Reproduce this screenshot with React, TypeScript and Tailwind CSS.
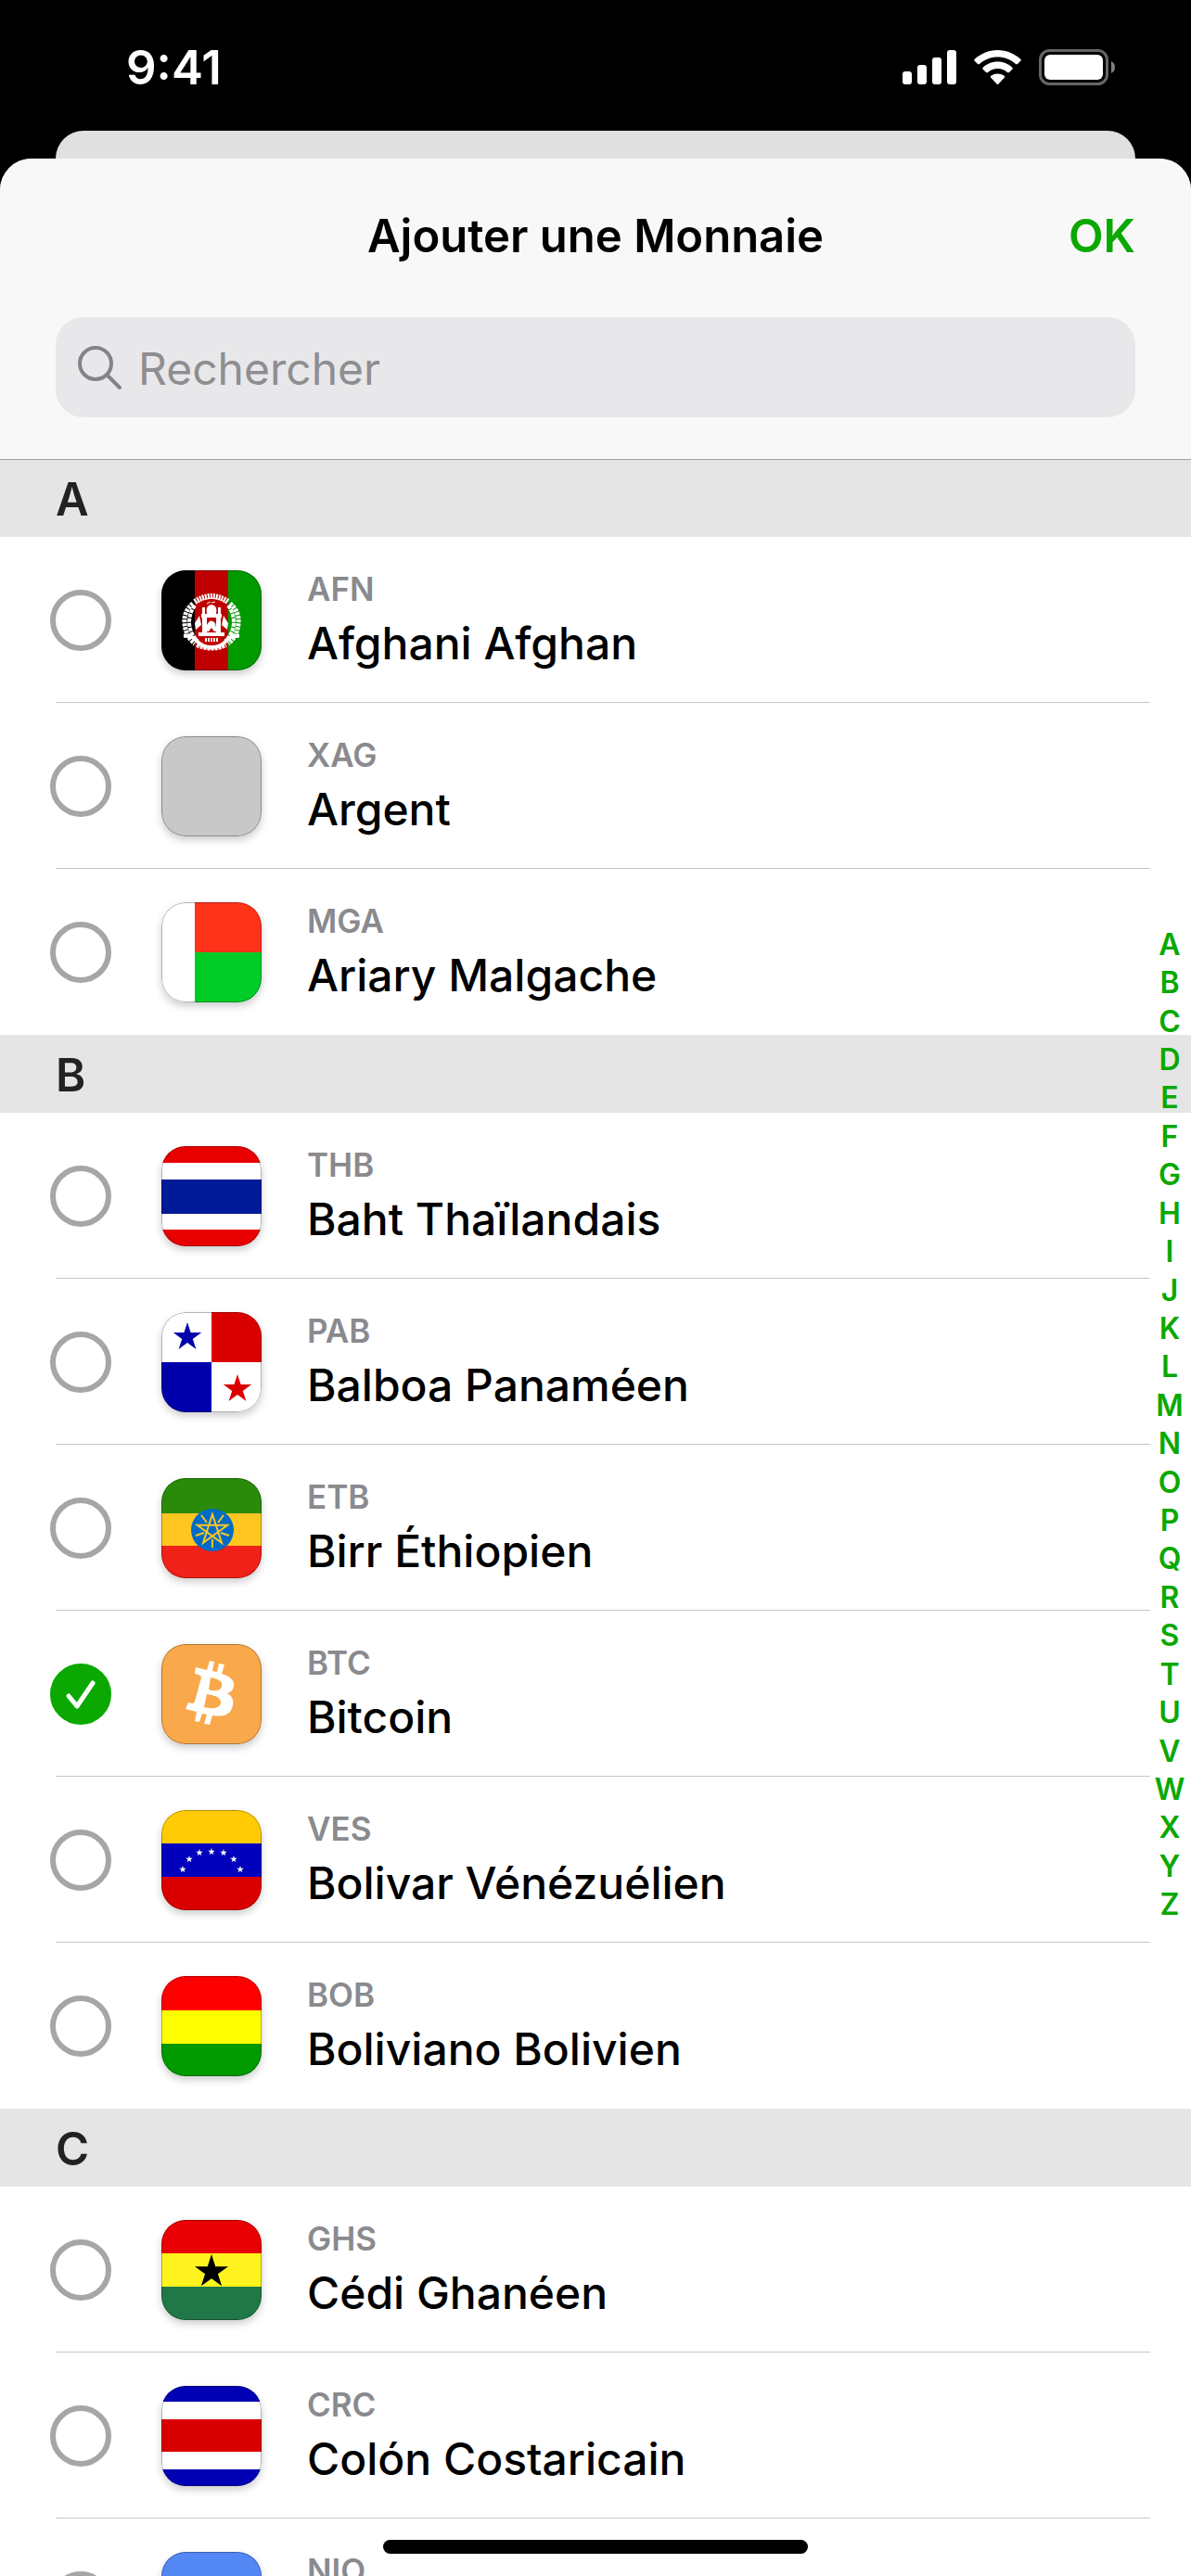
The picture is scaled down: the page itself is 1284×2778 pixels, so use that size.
import React, { useState } from 'react';

interface Currency {
  code: string;
  name: string;
  flag: React.ReactNode;
}

interface Section {
  letter: string;
  items: Currency[];
}

const STAR = '0,-10 2.25,-3.09 9.51,-3.09 3.63,1.18 5.88,8.09 0,3.82 -5.88,8.09 -3.63,1.18 -9.51,-3.09 -2.25,-3.09';

const Star = ({ x, y, size, fill }: { x: number; y: number; size: number; fill: string }) => (
  <polygon points={STAR} fill={fill} transform={`translate(${x} ${y}) scale(${size / 10})`} />
);

// Horizontal stripes, each given as [color, height]
const Stripes = ({ bands }: { bands: [string, number][] }) => {
  let y = 0;
  return (
    <>
      {bands.map(([color, height], i) => {
        const top = y;
        y += height;
        return <rect key={i} x="0" y={top} width="108" height={height} fill={color} />;
      })}
    </>
  );
};

const AfghanFlag = () => (
  <>
    <rect width="36" height="108" fill="#000" />
    <rect x="36" width="36" height="108" fill="#bf0000" />
    <rect x="72" width="36" height="108" fill="#009900" />
    <g fill="none" stroke="#fff">
      <path d="M34 36 Q24 44 25 57 Q26 71 36 79" strokeWidth="5" strokeDasharray="3 1" />
      <path d="M74 36 Q84 44 83 57 Q82 71 72 79" strokeWidth="5" strokeDasharray="3 1" />
      <path d="M36 38 Q30 46 30 57 Q31 69 39 76" strokeWidth="4" strokeDasharray="4 1" />
      <path d="M72 38 Q78 46 78 57 Q77 69 69 76" strokeWidth="4" strokeDasharray="4 1" />
      <path d="M36 34 Q54 22 72 34" strokeWidth="6" strokeDasharray="2 1" />
      <path d="M38 35 Q54 25 70 35" strokeWidth="1" />
      <path d="M24 71 Q33 70 38 76 Q44 83 54 83 Q64 83 70 76 Q75 70 84 71" strokeWidth="4" />
      <path d="M38 81 Q54 88 70 81" strokeWidth="4" strokeDasharray="3 1" />
      <path d="M47 75 H61" strokeWidth="4" strokeDasharray="2 1" />
      <path d="M49 36 l4 -2 M54 35 l4 -1" strokeWidth="1" />
    </g>
    <g fill="#fff">
      <path d="M49 47 Q47 38 54 37 Q61 38 59 47 Z" />
      <path d="M43 47 H65 V51 H43 Z M44 51 H49 V67 H44 Z M59 51 H64 V67 H59 Z M40 67 H68 V71 H40 Z" />
      <path d="M44 40 H47 V47 H44 Z M61 40 H64 V47 H61 Z" />
      <path d="M49 59 Q53 51 58 57 L60 66 H57 L54 62 L51 66 H48 Z" />
      <path d="M36 57 L41 49 L43 59 L37 64 Z M72 57 L67 49 L65 59 L71 64 Z" />
    </g>
  </>
);

const MalagasyFlag = () => (
  <>
    <rect width="36" height="108" fill="#fff" />
    <rect x="36" width="72" height="54" fill="#ff331a" />
    <rect x="36" y="54" width="72" height="54" fill="#00cc28" />
  </>
);

const PanamaFlag = () => (
  <>
    <rect width="108" height="108" fill="#fff" />
    <rect x="54" width="54" height="54" fill="#db0000" />
    <rect y="54" width="54" height="54" fill="#0000ab" />
    <Star x={28} y={27} size={16} fill="#0000ab" />
    <Star x={82} y={83} size={16} fill="#db0000" />
  </>
);

const EthiopiaFlag = () => (
  <>
    <Stripes bands={[['#2a8b0b', 38], ['#fec621', 35], ['#ef2118', 35]]} />
    <circle cx="55" cy="56" r="23" fill="#006bc6" />
    <g transform="translate(55 56)" fill="none" stroke="#fec621" strokeWidth="2">
      <polygon points="0,-17 10,13.8 -16.2,-5.3 16.2,-5.3 -10,13.8" />
      <path d="M0 10 V19 M9 3 L18 6 M-9 3 L-18 6 M6 -8 L12 -16 M-6 -8 L-12 -16" />
    </g>
  </>
);

const BitcoinLogo = () => (
  <>
    <rect width="108" height="108" fill="#f9a94b" />
    <path
      fill="#fff"
      fillRule="evenodd"
      d="M37 25 L49 28 L52 18 L57 19 L55 29 L60 30 L62 21 L68 22 L65 32 C74 35 79 39 78 45 C77 50 75 52 71 53 C76 56 78 60 77 66 C75 76 68 79 55 77 L52 87 L46 86 L49 76 L44 75 L41 84 L36 83 L38 73 L26 70 L29 63 L33 64 Q35 64 36 62 L43 36 Q43 34 40 33 L36 32 Z M53 36 L51 49 C57 51 63 51 65 46 C67 40 60 37 53 36 Z M49 54 L46 68 C53 70 62 70 64 64 C65 57 56 55 49 54 Z"
    />
  </>
);

const VenezuelaFlag = () => (
  <>
    <Stripes bands={[['#ffcb05', 36], ['#0000bd', 36], ['#db0000', 36]]} />
    {[[23, 64], [30, 53], [41, 46], [54, 45], [67, 46], [78, 53], [85, 64]].map(([x, y]) => (
      <Star key={x} x={x} y={y} size={4} fill="#fff" />
    ))}
  </>
);

const GhanaFlag = () => (
  <>
    <Stripes bands={[['#e80005', 36], ['#fff31f', 36], ['#207848', 36]]} />
    <Star x={54} y={56} size={19} fill="#000" />
  </>
);

const SECTIONS: Section[] = [
  {
    letter: 'A',
    items: [
      { code: 'AFN', name: 'Afghani Afghan', flag: <AfghanFlag /> },
      { code: 'XAG', name: 'Argent', flag: <Stripes bands={[['#c8c8c8', 108]]} /> },
      { code: 'MGA', name: 'Ariary Malgache', flag: <MalagasyFlag /> },
    ],
  },
  {
    letter: 'B',
    items: [
      {
        code: 'THB',
        name: 'Baht Thaïlandais',
        flag: <Stripes bands={[['#e80000', 18], ['#fff', 18], ['#001a98', 37], ['#fff', 17], ['#e80000', 18]]} />,
      },
      { code: 'PAB', name: 'Balboa Panaméen', flag: <PanamaFlag /> },
      { code: 'ETB', name: 'Birr Éthiopien', flag: <EthiopiaFlag /> },
      { code: 'BTC', name: 'Bitcoin', flag: <BitcoinLogo /> },
      { code: 'VES', name: 'Bolivar Vénézuélien', flag: <VenezuelaFlag /> },
      {
        code: 'BOB',
        name: 'Boliviano Bolivien',
        flag: <Stripes bands={[['#ff0000', 37], ['#ffff00', 36], ['#009900', 35]]} />,
      },
    ],
  },
  {
    letter: 'C',
    items: [
      { code: 'GHS', name: 'Cédi Ghanéen', flag: <GhanaFlag /> },
      {
        code: 'CRC',
        name: 'Colón Costaricain',
        flag: <Stripes bands={[['#0000b4', 17], ['#fff', 19], ['#d90000', 35], ['#fff', 19], ['#0000b4', 18]]} />,
      },
      {
        code: 'NIO',
        name: 'Córdoba Oro',
        flag: <Stripes bands={[['#5387f4', 36], ['#fff', 36], ['#5387f4', 36]]} />,
      },
    ],
  },
];

const ALPHABET = 'ABCDEFGHIJKLMNOPQRSTUVWXYZ'.split('');

const StatusBar = () => (
  <div className="flex h-[141px] shrink-0 items-start justify-between pt-[42px] pr-[82px] pl-[136px] text-white">
    <span className="text-[51px] leading-[62px] font-semibold">9:41</span>
    <svg className="mt-[10px] h-[40px] w-[230px]" viewBox="0 0 230 40" fill="#fff">
      <rect x="1" y="25" width="10" height="14" rx="3" />
      <rect x="17" y="18" width="10" height="21" rx="3" />
      <rect x="33" y="10" width="10" height="29" rx="3" />
      <rect x="49" y="2" width="10" height="37" rx="3" />
      <path d="M103.5 2 C113 2 122 6 128.5 12 Q129 13 128.5 13.5 L125 17 Q124 17.5 123 17 C117.5 12 111 9.5 103.5 9.5 C96 9.5 89.5 12 84 17 Q83 17.5 82 17 L78.5 13.5 Q78 13 78.5 12 C85 6 94 2 103.5 2 Z" />
      <path d="M103.5 14.5 C110 14.5 115.5 17 119.5 21 Q120 22 119.5 22.5 L116 26 Q115 26.5 114 26 C111 23.5 107.5 22 103.5 22 C99.5 22 96 23.5 93 26 Q92 26.5 91 26 L87.5 22.5 Q87 22 87.5 21 C91.5 17 97 14.5 103.5 14.5 Z" />
      <path d="M103.5 27.5 C106.5 27.5 109 28.5 111 30 Q111.5 31 111 31.5 L104.5 38.5 Q103.5 39.5 102.5 38.5 L96 31.5 Q95.5 31 96 30 C98 28.5 100.5 27.5 103.5 27.5 Z" />
      <rect x="149.5" y="2.5" width="72" height="36" rx="10" fill="none" stroke="#666" strokeWidth="3" />
      <rect x="154" y="7" width="63" height="27" rx="6" />
      <path d="M226 14 Q230 16 230 20.5 Q230 25 226 27 Z" fill="#808080" />
    </svg>
  </div>
);

const CurrencyRow = ({
  currency,
  checked,
  divider,
  onToggle,
}: {
  currency: Currency;
  checked: boolean;
  divider: boolean;
  onToggle: () => void;
}) => (
  <li>
    <label className="flex h-[178px] items-center pt-[2px] pl-[54px]">
      <span className="grid size-[66px] shrink-0">
        <input
          type="checkbox"
          checked={checked}
          onChange={onToggle}
          className="col-start-1 row-start-1 size-[66px] appearance-none rounded-full border-[6px] border-[#a6a6a6] checked:border-[#0aa800] checked:bg-[#0aa800]"
        />
        {checked && (
          <svg
            className="pointer-events-none col-start-1 row-start-1 size-[66px]"
            viewBox="0 0 66 66"
            fill="none"
            stroke="#fff"
            strokeWidth="5"
            strokeLinecap="round"
            strokeLinejoin="round"
          >
            <path d="M20 35 L29 46 L46 21" />
          </svg>
        )}
      </span>
      <span className="ml-[54px] size-[108px] shrink-0 rounded-[26px] shadow-[0_4px_8px_rgba(0,0,0,0.2)]">
        <svg className="size-full rounded-[26px]" viewBox="0 0 108 108">
          {currency.flag}
          <rect x="0.5" y="0.5" width="107" height="107" rx="25.5" fill="none" stroke="#000" strokeOpacity="0.3" />
        </svg>
      </span>
      <span className="ml-[49px] flex flex-col pt-[6px]">
        <span className="text-[35px] leading-[44px] font-semibold text-[#8a8a8e]">{currency.code}</span>
        <span className="text-[48px] leading-[74px] font-medium text-black">{currency.name}</span>
      </span>
    </label>
    <div className={`mr-[44px] ml-[60px] h-px ${divider ? 'bg-[#c6c6c8]' : 'bg-white'}`} />
  </li>
);

export default function App() {
  const [selected, setSelected] = useState<string[]>(['BTC']);
  const [query, setQuery] = useState('');

  const toggle = (code: string) =>
    setSelected((prev) => (prev.includes(code) ? prev.filter((c) => c !== code) : [...prev, code]));

  return (
    <div className="relative flex h-screen flex-col overflow-hidden bg-black font-[Inter,'Liberation_Sans',sans-serif]">
      <StatusBar />

      {/* Edge of the screen underneath the sheet */}
      <div className="mx-[60px] h-[30px] shrink-0 rounded-t-[30px] bg-[#e0e0e0]" />

      <main className="flex min-h-0 flex-1 flex-col overflow-hidden rounded-t-[34px] bg-white">
        <header className="relative z-10 shrink-0 bg-[#f8f8f8] px-[60px] pb-[45px] shadow-[0_1px_0_#a0a0a2]">
          <div className="grid h-[171px] grid-cols-[1fr_auto_1fr] items-center pb-[4px]">
            <h1 className="col-start-2 text-[49px] leading-[60px] font-semibold text-black">Ajouter une Monnaie</h1>
            <button type="button" className="justify-self-end text-[49px] leading-[60px] font-semibold text-[#0aa800]">
              OK
            </button>
          </div>
          <label className="flex h-[108px] items-center gap-[17px] rounded-[30px] bg-[#e8e8ea] pl-[22px]">
            <svg className="size-[50px] shrink-0" viewBox="0 0 50 50" fill="none" stroke="#848488" strokeWidth="4" strokeLinecap="round">
              <circle cx="21" cy="21" r="17" />
              <path d="M34 34 L47 47" />
            </svg>
            <input
              type="search"
              aria-label="Rechercher"
              placeholder="Rechercher"
              value={query}
              onChange={(e) => setQuery(e.target.value)}
              className="min-w-0 flex-1 bg-transparent pt-[4px] text-[48px] leading-[60px] text-black outline-none placeholder:text-[#8e8e92]"
            />
          </label>
        </header>

        <div className="min-h-0 flex-1 overflow-hidden">
          {SECTIONS.map((section) => (
            <section key={section.letter}>
              <h2 className="flex h-[84px] items-center bg-[#e5e5e5] pt-[4px] pl-[60px] text-[49px] leading-[60px] font-semibold text-[#222]">
                {section.letter}
              </h2>
              <ul>
                {section.items.map((item, i) => (
                  <CurrencyRow
                    key={item.code}
                    currency={item}
                    checked={selected.includes(item.code)}
                    divider={i < section.items.length - 1 || section.letter === 'C'}
                    onToggle={() => toggle(item.code)}
                  />
                ))}
              </ul>
            </section>
          ))}
        </div>
      </main>

      {/* Alphabet index over the right edge of the list */}
      <nav className="absolute top-[998px] right-0 grid h-[1077px] w-[46px] auto-rows-fr">
        {ALPHABET.map((letter) => (
          <button
            key={letter}
            type="button"
            className="flex items-center justify-center text-[32px] leading-[40px] font-semibold text-[#0aa800]"
          >
            {letter}
          </button>
        ))}
      </nav>

      <div className="absolute bottom-[24px] left-1/2 h-[15px] w-[458px] -translate-x-1/2 rounded-full bg-black" />
    </div>
  );
}
